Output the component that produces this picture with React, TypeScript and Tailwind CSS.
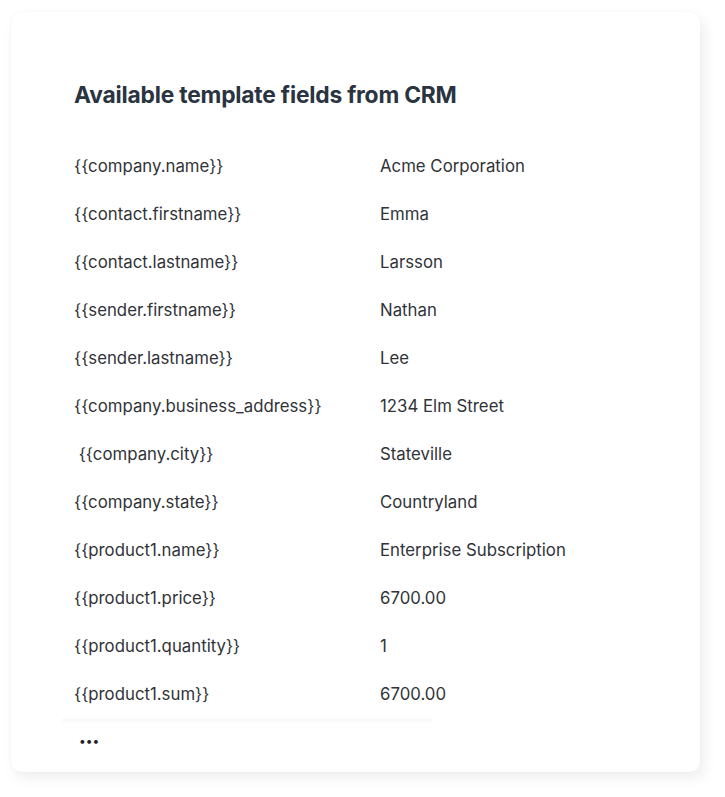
const fields: [string, string][] = [
  ["{{company.name}}", "Acme Corporation"],
  ["{{contact.firstname}}", "Emma"],
  ["{{contact.lastname}}", "Larsson"],
  ["{{sender.firstname}}", "Nathan"],
  ["{{sender.lastname}}", "Lee"],
  ["{{company.business_address}}", "1234 Elm Street"],
  ["\u00a0{{company.city}}", "Stateville"],
  ["{{company.state}}", "Countryland"],
  ["{{product1.name}}", "Enterprise Subscription"],
  ["{{product1.price}}", "6700.00"],
  ["{{product1.quantity}}", "1"],
  ["{{product1.sum}}", "6700.00"],
];

export default function App() {
  return (
    <div className="w-[725px] h-[797px] bg-white pt-[12px] pl-[11px] font-['Inter',sans-serif]">
      <div className="w-[689px] h-[760px] rounded-[10px] bg-white shadow-[4px_6px_14px_rgba(0,0,0,0.07),0_0_3px_rgba(0,0,0,0.03)] pt-[67px] pl-[63px] flex flex-col">
        <h1 className="text-[22.8px] leading-[32px] font-bold text-[#2a3441] tracking-[-0.2px]">
          Available template fields from CRM
        </h1>
        <div className="mt-[32px] flex flex-col">
          {fields.map(([key, value]) => (
            <div key={key} className="h-[48px] flex items-center text-[16.8px] text-[#303338]">
              <span className="w-[306px]">{key}</span>
              <span>{value}</span>
            </div>
          ))}
        </div>
        <div className="h-[5px] w-[370px] -ml-[12px] bg-gradient-to-b from-[#f6f7f7] to-white" />
        <div className="mt-[7px] ml-[5px] text-[12px] leading-[20px] text-[#222]">•••</div>
      </div>
    </div>
  );
}
